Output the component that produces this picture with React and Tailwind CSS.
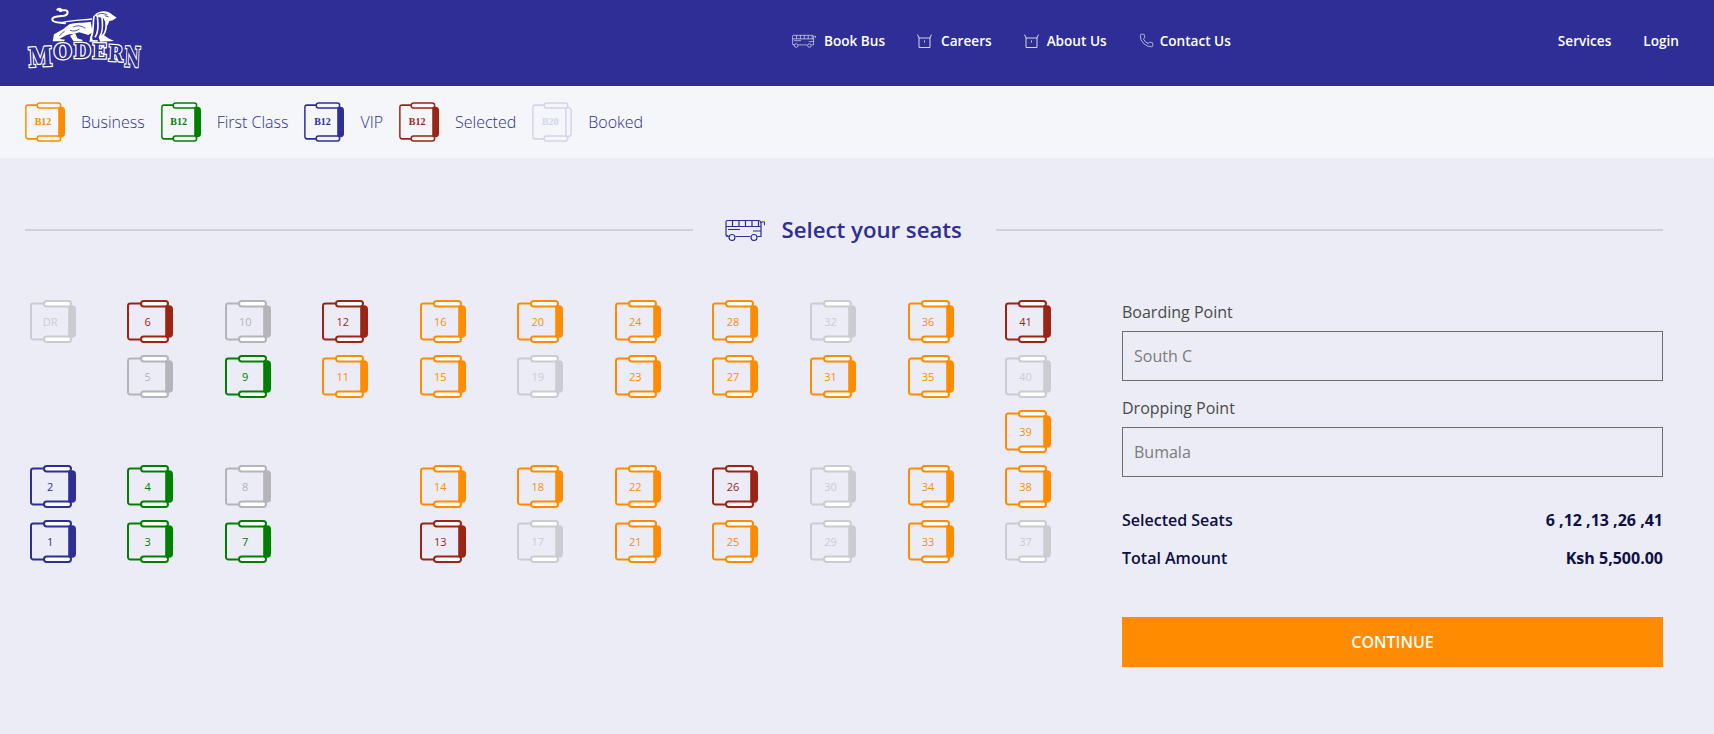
import React from "react";
import { Phone } from "lucide-react";

const C = {
  o: { line: "#ff8c00", fill: "#ff8c00", text: "#ff8c00" },
  g: { line: "#008000", fill: "#008000", text: "#008000" },
  n: { line: "#2e2e96", fill: "#2e2e96", text: "#2e2e96" },
  r: { line: "#9b2415", fill: "#9b2415", text: "#9b2415" },
  m: { line: "#b4b4ba", fill: "#b4b4ba", text: "#b4b4ba" },
  l: { line: "#cbcbd2", fill: "#cbcbd2", text: "#cbcbd2" },
};

function SeatShape({ c, w, h, sw = 2, arm = "#ffffff", hollow = false }) {
  return (
    <svg width={w} height={h} viewBox="0 0 46 43" preserveAspectRatio="none" className="absolute inset-0">
      <path d="M38 3.4H3.4a2.4 2.4 0 0 0-2.4 2.4v31.4a2.4 2.4 0 0 0 2.4 2.4h34.6" fill="none" stroke={c.line} strokeWidth={sw} />
      {hollow ? (
        <path d="M39 6h2.6a3.4 3.4 0 0 1 3.4 3.4v24.2a3.4 3.4 0 0 1-3.4 3.4h-2.6z" fill="none" stroke={c.line} strokeWidth={sw} />
      ) : (
        <path d="M38.2 5.2h3.8a4 4 0 0 1 4 4v24.6a4 4 0 0 1-4 4h-3.8z" fill={c.fill} />
      )}
      <rect x="14" y="1" width="27" height="5.4" rx="2.7" fill={arm} stroke={c.line} strokeWidth={sw} />
      <rect x="14" y="36.6" width="27" height="5.4" rx="2.7" fill={arm} stroke={c.line} strokeWidth={sw} />
    </svg>
  );
}

function Seat({ label, k }) {
  const c = C[k];
  return (
    <div className="relative w-[46px] h-[43px] flex items-center justify-center pr-[5px]">
      <SeatShape c={c} w={46} h={43} />
      <span className="relative text-[11px] font-medium leading-none" style={{ color: c.text }}>{label}</span>
    </div>
  );
}

function BusIcon({ className, color, sw = 1 }) {
  return (
    <svg className={className} viewBox="0 0 40 22" fill="none" stroke={color} strokeWidth={sw}>
      <path d="M1 15.5V3a1.5 1.5 0 0 1 1.5-1.5H33a3 3 0 0 1 3 3V17.5H32.5M25 17.5H10.5M3.5 17.5H2.5A1.5 1.5 0 0 1 1 16z" />
      <path d="M1 7.5h35M7.5 1.5v6M14 1.5v6M20.5 1.5v6M27 1.5v6M33.5 1.8v5.7M3 10.5h12M28 12h8M36 3.5c1.5-.8 3-.8 3.5-.3v3" />
      <circle cx="7" cy="18.5" r="3" />
      <circle cx="29" cy="18.5" r="3" />
    </svg>
  );
}

function BoxIcon() {
  return (
    <svg width="15" height="14" viewBox="0 0 15 14" fill="none" stroke="#ffffff" strokeWidth="0.8" className="shrink-0">
      <path d="M2 4h11v9.5H2zM2 4 0.6 0.6M13 4l1.4-3.4M7.5 6.5v2" />
    </svg>
  );
}

function Logo() {
  const letters = [
    ["M", 26, 186, 72, 58, -3],
    ["O", 102, 163, 54, 46, -2],
    ["D", 161, 160, 51, 45, 0],
    ["E", 217, 160, 43, 45, 1],
    ["R", 264, 167, 44, 48, 3],
    ["N", 312, 184, 48, 60, 3],
  ];
  return (
    <svg width="130" height="68" viewBox="0 0 390 204" className="shrink-0 -ml-[5px] mt-[5px]">
      <g fill="none" stroke="#ffffff" strokeWidth="6" strokeLinecap="round">
        <path d="M112 14C122 7 130 20 120 18" />
        <path d="M118 16H136C146 18 145 30 132 32C115 34 95 34 97 45C100 55 125 52 135 55" />
        <path d="M128 52C155 46 190 45 215 42" strokeWidth="4" />
      </g>
      <g fill="#ffffff">
        <path d="M148 58C165 52 190 54 212 50L218 82L205 90L178 82C165 88 150 87 140 90L118 102L135 104L132 109L98 109L102 88L130 72Z" />
        <path d="M165 84L172 100L188 105L186 109L160 108L150 92Z" />
        <path d="M222 32C235 15 265 15 275 28L290 38L278 46L268 48L262 62L250 40Z" />
        <path d="M248 88L265 100L282 108L240 110L236 96Z" />
        <path d="M214 85L218 105L234 106L233 110L208 110Z" />
      </g>
      <g fill="none" stroke="#ffffff" strokeWidth="5" strokeLinecap="round">
        <path d="M222 35C218 55 222 85 212 100" />
        <path d="M232 28C232 50 240 75 226 95" />
        <path d="M246 28C246 50 252 70 240 95" />
        <path d="M258 45C258 60 262 75 250 90" />
      </g>
      <g fill="none" stroke="#2e2e96" strokeWidth="2.5">
        <path d="M160 66C172 60 185 62 196 70M150 76C160 80 170 78 178 72M232 30C238 24 252 24 262 30M254 32L266 36M240 40C242 55 246 70 240 85M118 92L134 78" />
      </g>
      <g fontFamily="'DejaVu Serif', serif" fontWeight="700" fill="#2e2e96" stroke="#ffffff" strokeWidth="8" strokeLinejoin="miter" style={{ paintOrder: "stroke" }}>
        {letters.map(([t, x, y, w, h, r]) => (
          <text key={t} x={x} y={y} fontSize={h / 0.73} textLength={w} lengthAdjust="spacingAndGlyphs" transform={`rotate(${r} ${x} ${y})`}>{t}</text>
        ))}
      </g>
    </svg>
  );
}

const legend = [
  ["Business", "o", "B12"],
  ["First Class", "g", "B12"],
  ["VIP", "n", "B12"],
  ["Selected", "r", "B12"],
  ["Booked", "lg", "B20"],
];
const legendGrey = { line: "#d3d4ec", fill: "#d3d4ec", text: "#d3d4ec" };

const columns = [
  [["DR", "l"], null, null, ["2", "n"], ["1", "n"]],
  [["6", "r"], ["5", "m"], null, ["4", "g"], ["3", "g"]],
  [["10", "m"], ["9", "g"], null, ["8", "m"], ["7", "g"]],
  [["12", "r"], ["11", "o"], null, null, null],
  [["16", "o"], ["15", "o"], null, ["14", "o"], ["13", "r"]],
  [["20", "o"], ["19", "l"], null, ["18", "o"], ["17", "l"]],
  [["24", "o"], ["23", "o"], null, ["22", "o"], ["21", "o"]],
  [["28", "o"], ["27", "o"], null, ["26", "r"], ["25", "o"]],
  [["32", "l"], ["31", "o"], null, ["30", "l"], ["29", "l"]],
  [["36", "o"], ["35", "o"], null, ["34", "o"], ["33", "o"]],
  [["41", "r"], ["40", "l"], ["39", "o"], ["38", "o"], ["37", "l"]],
];

export default function App() {
  return (
    <div className="min-h-[734px] bg-[#ebecf5] overflow-hidden" style={{ fontFamily: "'Open Sans', sans-serif" }}>
      <header className="h-[86px] bg-[#2e2e96] flex items-start pl-[25px] text-white text-[13.6px] font-semibold">
        <Logo />
        <nav className="ml-[642px] h-[82px] flex items-center whitespace-nowrap">
          <a className="flex items-center gap-[8px]"><BusIcon className="w-[24px] h-[14px]" color="#ffffff" />Book Bus</a>
          <a className="flex items-center gap-[9px] ml-[32px]"><BoxIcon />Careers</a>
          <a className="flex items-center gap-[8px] ml-[32px]"><BoxIcon />About Us</a>
          <a className="flex items-center gap-[6px] ml-[32px]"><Phone size={15} strokeWidth={1} className="shrink-0" />Contact Us</a>
          <a className="ml-[327px]">Services</a>
          <a className="ml-[32px]">Login</a>
        </nav>
      </header>

      <div className="h-[72px] bg-[#f5f6fa] flex items-center pl-[25px] gap-[16px] text-[#2e2e96] text-[16px] font-light">
        {legend.map(([name, k, code]) => {
          const c = k === "lg" ? legendGrey : C[k];
          return (
            <React.Fragment key={name}>
              <div className="relative w-[40px] h-[40px] flex items-center justify-center pr-[4px] shrink-0">
                <SeatShape c={c} w={40} h={40} sw={1.7} arm="#f5f6fa" hollow={k === "lg"} />
                <span className="relative text-[10px] font-bold leading-none" style={{ color: c.text, fontFamily: "'Liberation Serif', serif" }}>{code}</span>
              </div>
              <span>{name}</span>
            </React.Fragment>
          );
        })}
      </div>

      <main className="pl-[25px] pr-[51px] pt-[57px]">
        <div className="flex items-center h-[28px]">
          <div className="flex-1 h-[2px] bg-[#cfd0e4] translate-y-[1px]" />
          <div className="flex items-center w-[303px] pl-[32px] pt-[2px] text-[#2e2e96] text-[22.2px] font-semibold">
            <BusIcon className="w-[40px] h-[22px] shrink-0" color="#2e2e96" sw={1.2} />
            <span className="ml-[17px] whitespace-nowrap">Select your seats</span>
          </div>
          <div className="flex-1 h-[2px] bg-[#cfd0e4] translate-y-[1px]" />
        </div>

        <div className="flex justify-between mt-[57px]">
          <div className="ml-[4.6px] w-[1021.6px] grid grid-flow-col grid-cols-[repeat(11,46px)] grid-rows-[repeat(5,43px)] gap-y-[12px] justify-between">
            {columns.flat().map((s, i) =>
              s ? <Seat key={i} label={s[0]} k={s[1]} /> : <div key={i} />
            )}
          </div>

          <aside className="w-[541px] text-[16px]">
            <label className="block text-[#4a4a4a] leading-[22px] mt-[1px]">Boarding Point</label>
            <div className="mt-[8px] h-[50px] border border-[#6d6d6d] flex items-center pl-[11px] text-[#7b7b7b]">South C</div>
            <label className="block text-[#4a4a4a] leading-[22px] mt-[16px]">Dropping Point</label>
            <div className="mt-[8px] h-[50px] border border-[#6d6d6d] flex items-center pl-[11px] text-[#7b7b7b]">Bumala</div>
            <div className="mt-[32px] flex justify-between font-semibold text-[#0f0f45] leading-[22px]">
              <span>Selected Seats</span>
              <span className="font-bold">6 ,12 ,13 ,26 ,41</span>
            </div>
            <div className="mt-[16px] flex justify-between font-semibold text-[#0f0f45] leading-[22px]">
              <span>Total Amount</span>
              <span className="font-bold">Ksh 5,500.00</span>
            </div>
            <button className="mt-[48px] w-full h-[50px] bg-[#ff8c00] text-white font-semibold">CONTINUE</button>
          </aside>
        </div>
      </main>
    </div>
  );
}
